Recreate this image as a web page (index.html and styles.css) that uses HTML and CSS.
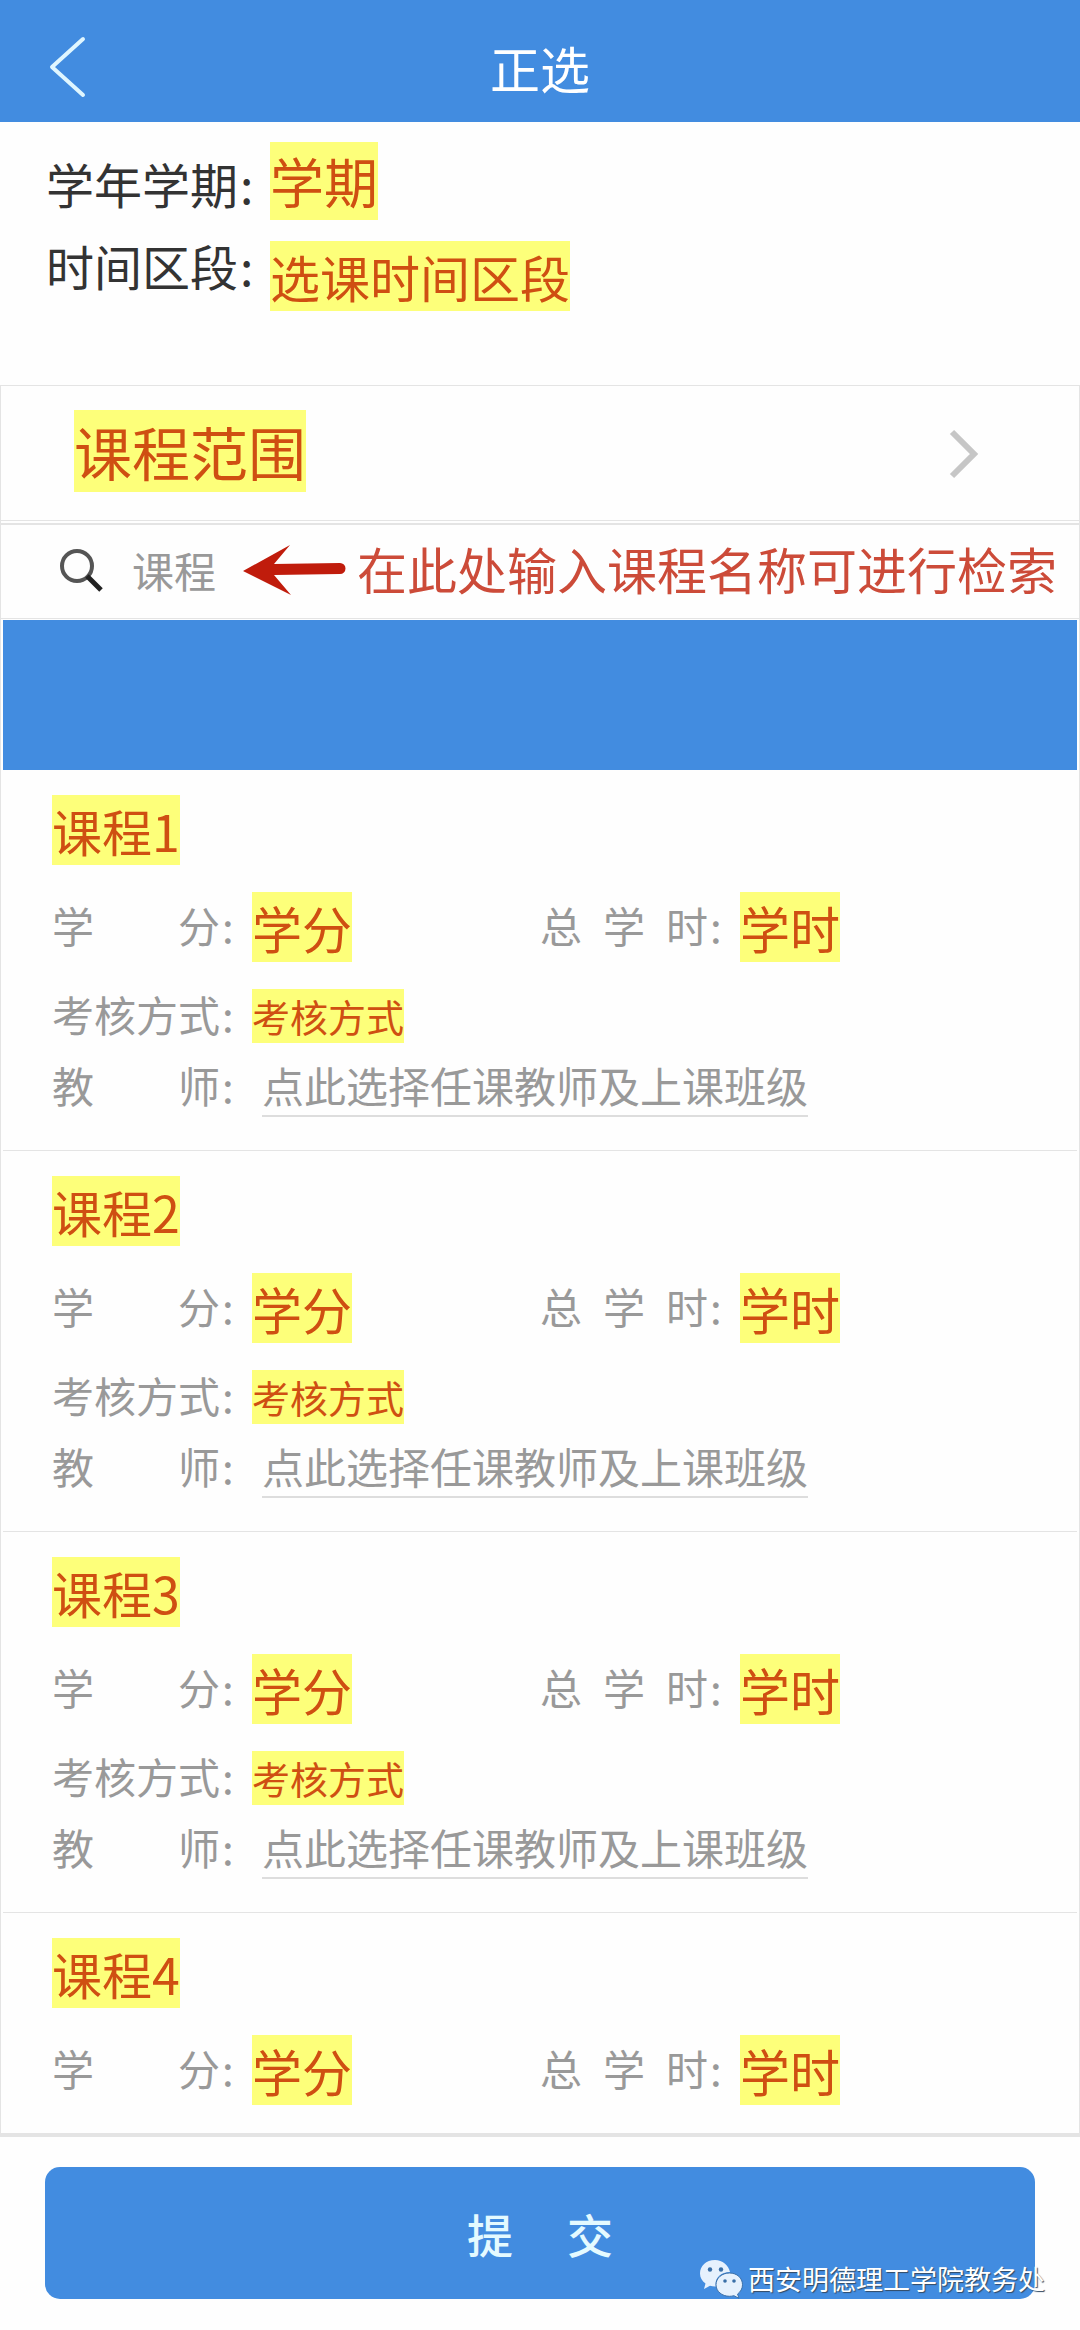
FILE: index.html
```html
<!DOCTYPE html>
<html lang="zh-CN">
<head>
<meta charset="utf-8">
<meta name="viewport" content="width=device-width, initial-scale=1">
<title>正选</title>
<link rel="stylesheet" href="styles.css">
</head>
<body>
<header class="topbar">
  <button class="back" type="button" aria-label="返回">
    <svg width="40" height="64" viewBox="0 0 40 64" fill="none" stroke="#dff6ff" stroke-width="4" stroke-linecap="round" stroke-linejoin="round"><path d="M37 4 6 32l31 28"/></svg>
  </button>
  <h1 class="topbar-title">正选</h1>
</header>

<section class="term">
  <div class="term-row term-row-first">
    <span class="term-label">学年学期<span class="colon">:</span></span>
    <mark class="mark mark-term">学期</mark>
  </div>
  <div class="term-row">
    <span class="term-label">时间区段<span class="colon">:</span></span>
    <mark class="mark">选课时间区段</mark>
  </div>
</section>

<main class="panel">
  <button class="scope" type="button">
    <mark class="mark mark-scope">课程范围</mark>
    <svg class="scope-arrow" width="30" height="52" viewBox="0 0 30 52" fill="none" stroke="#c6c6c6" stroke-width="6"><path d="M3 4l22 22L3 48"/></svg>
  </button>

  <div class="search">
    <label class="search-icon" for="keyword" aria-label="搜索课程">
      <svg width="44" height="44" viewBox="0 0 44 44" fill="none"><circle cx="18" cy="18" r="15" stroke="#555" stroke-width="4"/><path d="M28 28l14 14" stroke="#222" stroke-width="5"/></svg>
    </label>
    <input class="search-input" id="keyword" type="text" placeholder="课程">
    <svg class="search-arrow" width="106" height="52" viewBox="0 0 106 52" fill="#c01c0c"><path d="M1 27 48 1 32 20l66-1a5 5 0 0 1 0 11l-66 1 17 20z"/></svg>
    <p class="search-hint">在此处输入课程名称可进行检索</p>
  </div>

  <div class="list">
    <div class="banner"></div>

    <article class="course">
      <h2 class="mark course-name">课程1</h2>
      <dl class="facts">
        <div class="facts-row">
          <div class="fact"><dt class="key"><span class="key-name">学分</span><span class="colon">:</span></dt><dd class="mark">学分</dd></div>
          <div class="fact"><dt class="key"><span class="key-name">总学时</span><span class="colon">:</span></dt><dd class="mark">学时</dd></div>
        </div>
        <div class="fact fact-exam"><dt class="key"><span class="key-name">考核方式</span><span class="colon">:</span></dt><dd class="mark mark-exam">考核方式</dd></div>
        <div class="fact fact-teacher"><dt class="key"><span class="key-name">教师</span><span class="colon">:</span></dt><dd><a class="pick" href="#teacher-1">点此选择任课教师及上课班级</a></dd></div>
      </dl>
    </article>

    <article class="course">
      <h2 class="mark course-name">课程2</h2>
      <dl class="facts">
        <div class="facts-row">
          <div class="fact"><dt class="key"><span class="key-name">学分</span><span class="colon">:</span></dt><dd class="mark">学分</dd></div>
          <div class="fact"><dt class="key"><span class="key-name">总学时</span><span class="colon">:</span></dt><dd class="mark">学时</dd></div>
        </div>
        <div class="fact fact-exam"><dt class="key"><span class="key-name">考核方式</span><span class="colon">:</span></dt><dd class="mark mark-exam">考核方式</dd></div>
        <div class="fact fact-teacher"><dt class="key"><span class="key-name">教师</span><span class="colon">:</span></dt><dd><a class="pick" href="#teacher-2">点此选择任课教师及上课班级</a></dd></div>
      </dl>
    </article>

    <article class="course">
      <h2 class="mark course-name">课程3</h2>
      <dl class="facts">
        <div class="facts-row">
          <div class="fact"><dt class="key"><span class="key-name">学分</span><span class="colon">:</span></dt><dd class="mark">学分</dd></div>
          <div class="fact"><dt class="key"><span class="key-name">总学时</span><span class="colon">:</span></dt><dd class="mark">学时</dd></div>
        </div>
        <div class="fact fact-exam"><dt class="key"><span class="key-name">考核方式</span><span class="colon">:</span></dt><dd class="mark mark-exam">考核方式</dd></div>
        <div class="fact fact-teacher"><dt class="key"><span class="key-name">教师</span><span class="colon">:</span></dt><dd><a class="pick" href="#teacher-3">点此选择任课教师及上课班级</a></dd></div>
      </dl>
    </article>

    <article class="course course-last">
      <h2 class="mark course-name">课程4</h2>
      <dl class="facts">
        <div class="facts-row">
          <div class="fact"><dt class="key"><span class="key-name">学分</span><span class="colon">:</span></dt><dd class="mark">学分</dd></div>
          <div class="fact"><dt class="key"><span class="key-name">总学时</span><span class="colon">:</span></dt><dd class="mark">学时</dd></div>
        </div>
      </dl>
    </article>
  </div>
</main>

<footer class="actions">
  <button class="submit" type="submit"><span>提</span><span>交</span></button>
  <div class="watermark">
    <svg width="44" height="40" viewBox="0 0 44 40"><path fill="#e6f1fd" d="M16 1C7 1 1 7 1 14.500c0 4 2 7.500 5.500 10L5 30l6-3.200c1.600.5 3.300.7 5 .7h1C15 20 21 13 31 13 29.500 6 23.500 1 16 1z"/><path fill="#e6f1fd" stroke="#3a6fa8" stroke-width="1" d="M30.500 14C23 14 17 19 17 25.700s6 11.600 13.500 11.600c1.500 0 3-.2 4.400-.6l5 2.600-1.300-4.300c3-2.200 4.900-5.500 4.900-9.300C43.500 19 38 14 30.500 14z"/><g fill="#3a6fa8"><circle cx="11" cy="10.500" r="2.200"/><circle cx="22" cy="10.500" r="2.200"/><circle cx="26" cy="22" r="1.800"/><circle cx="35" cy="22" r="1.800"/></g></svg>
    <span>西安明德理工学院教务处</span>
  </div>
</footer>
</body>
</html>
```
FILE: styles.css
```css
:root {
  --blue: #428ce0;
  --line: #e4e4e4;
  --grey: #999;
  --red: #cf4f12;
  --yellow: #fdff7a;
}

* { box-sizing: border-box; }

body {
  margin: 0;
  background: #fefefe;
  color: #333;
  font-family: "Noto Sans CJK SC", "Noto Sans", sans-serif;
}

h1, h2, p, dl, dd { margin: 0; font-weight: 400; }

button {
  border: 0;
  padding: 0;
  background: none;
  color: inherit;
  font: inherit;
}

/* Title bar */
.topbar {
  display: grid;
  grid-template-columns: 1fr auto 1fr;
  align-items: center;
  height: 122px;
  padding: 12px 46px 0;
  background: var(--blue);
  color: #fff;
}
.back { justify-self: start; display: flex; }
.topbar-title { font-size: 50px; line-height: 70px; }

/* Highlighted values */
.mark {
  background: var(--yellow);
  color: var(--red);
  font-size: 50px;
  line-height: 70px;
  white-space: nowrap;
}
.mark-term { font-size: 54px; line-height: 78px; }
.mark-scope { font-size: 58px; line-height: 82px; }
.mark-exam { font-size: 38px; line-height: 54px; }

/* Term summary */
.term {
  display: flex;
  flex-direction: column;
  gap: 21px;
  padding: 20px 46px 74px;
}
.term-row { display: flex; align-items: flex-start; }
.term-row-first { align-items: flex-end; }
.term-label {
  width: 224px;
  font-size: 48px;
  line-height: 48px;
  white-space: nowrap;
}
.term-row-first .term-label { line-height: 74px; }
.colon { margin-left: 2px; }

/* Course panel */
.panel { border: 1px solid var(--line); border-bottom: 4px solid var(--line); }

.scope {
  display: flex;
  align-items: flex-start;
  justify-content: space-between;
  width: 100%;
  height: 135px;
  padding: 24px 100px 0 73px;
  border-bottom: 1px solid var(--line);
}
.scope-arrow { margin-top: 18px; }

.search {
  display: flex;
  align-items: center;
  height: 96px;
  margin-top: 2px;
  padding: 0 20px 4px 58px;
  border-top: 2px solid var(--line);
  border-bottom: 1px solid var(--line);
}
.search-icon { display: flex; }
.search-input {
  width: 110px;
  margin-left: 29px;
  padding: 0;
  border: 0;
  background: none;
  color: #333;
  font: inherit;
  font-size: 42px;
}
.search-input::placeholder { color: var(--grey); opacity: 1; }
.search-arrow { flex: none; }
.search-hint {
  margin-left: 9px;
  padding-bottom: 4px;
  color: #cc4b39;
  font-size: 50px;
  line-height: 72px;
  white-space: nowrap;
}

/* Course list */
.list { padding: 1px 2px 0; }
.banner { height: 150px; background: var(--blue); }

.course {
  padding: 25px 49px 33px;
  border-bottom: 1px solid var(--line);
}
.course-last { padding-bottom: 28px; border-bottom: 0; }
.course-name { width: max-content; }

.facts { padding-top: 27px; }
.facts-row { display: grid; grid-template-columns: 1fr 1fr; }
.fact { display: flex; align-items: flex-start; }
.fact-exam { margin-top: 27px; }
.fact-teacher { margin-top: 16px; }

.key {
  display: flex;
  width: 200px;
  color: var(--grey);
  font-size: 42px;
  line-height: 66px;
}
.key-name { width: 168px; text-align-last: justify; }
.fact-exam .key { line-height: 50px; }
.fact-teacher .key { line-height: 52px; }

.pick {
  display: block;
  margin-left: 10px;
  padding-bottom: 4px;
  border-bottom: 2px solid #ddd;
  color: var(--grey);
  font-size: 42px;
  line-height: 52px;
  text-decoration: none;
  white-space: nowrap;
}

/* Submit area */
.actions { position: relative; padding: 30px 45px; }
.submit {
  display: flex;
  align-items: center;
  justify-content: center;
  gap: 54px;
  width: 100%;
  height: 132px;
  border-radius: 15px;
  background: var(--blue);
  color: #e4faff;
  font-size: 46px;
  font-weight: 500;
}
.watermark {
  position: absolute;
  right: 35px;
  bottom: 30px;
  display: flex;
  align-items: center;
  gap: 5px;
  color: #fff;
  font-size: 27px;
  line-height: 40px;
  text-shadow: 1px 1px 1px #334a63;
}
```
